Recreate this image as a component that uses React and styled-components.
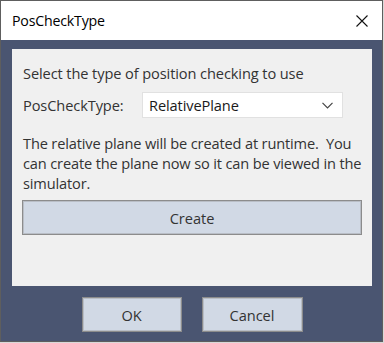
import React from "react";
import styled, { createGlobalStyle } from "styled-components";

const Global = createGlobalStyle`
  html, body { margin: 0; padding: 0; background: #d9d9d9; }
  body { font-family: "Open Sans", "Noto Sans", sans-serif; }
`;

const Window = styled.div`
  box-sizing: border-box;
  width: 383px;
  height: 342px;
  border: 1px solid #5e5e5e;
  display: flex;
  flex-direction: column;
  background: #4a5571;
`;

const TitleBar = styled.div`
  height: 39px;
  background: #ffffff;
  display: flex;
  align-items: center;
  justify-content: space-between;
  padding: 0 14px 0 11px;
  flex-shrink: 0;
`;

const Title = styled.span`
  font-size: 14.2px;
  color: #000;
  letter-spacing: -0.2px;
  margin-top: -1px;
`;

const CloseIcon = styled.svg`
  width: 12px;
  height: 12px;
  display: block;
`;

const Frame = styled.div`
  flex: 1;
  display: flex;
  flex-direction: column;
  padding: 9px 10px 0 11px;
`;

const Panel = styled.div`
  box-sizing: border-box;
  height: 237px;
  background: #f0f0f0;
  padding: 14px 10px 0 10px;
  display: flex;
  flex-direction: column;
  color: #333;
  font-size: 14.6px;
  line-height: 20px;
  letter-spacing: -0.1px;
`;

const Text = styled.div`
  padding-left: 1px;
`;

const FieldRow = styled.div`
  display: flex;
  align-items: center;
  margin-top: 9px;
`;

const Label = styled.span`
  width: 119px;
  padding-left: 1px;
`;

const Select = styled.div`
  box-sizing: border-box;
  width: 201px;
  height: 26px;
  background: #fff;
  border: 1px solid #e1e1e1;
  display: flex;
  align-items: center;
  justify-content: space-between;
  padding: 0 9px 0 6px;
  color: #1a1a1a;
`;

const Chevron = styled.svg`
  width: 11px;
  height: 7px;
  display: block;
`;

const Paragraph = styled.div`
  margin: 15px -6px 0 0;
  padding-left: 1px;
  letter-spacing: -0.15px;
`;

const Button = styled.button`
  box-sizing: border-box;
  width: ${(p) => p.$w}px;
  height: 35px;
  background: #d1d9e5;
  border: 1px solid #8c8c8c;
  box-shadow: inset 0 0 0 1px #b9bec6;
  font-family: inherit;
  font-size: 14.6px;
  color: #333;
  letter-spacing: -0.05px;
  padding: 0;
  margin: 0;
`;

const CreateWrap = styled.div`
  margin-top: 7px;
`;

const ButtonRow = styled.div`
  display: flex;
  justify-content: center;
  gap: 20px;
  margin-top: 11px;
`;

export default function App() {
  return (
    <>
      <Global />
      <Window>
        <TitleBar>
          <Title>PosCheckType</Title>
          <CloseIcon viewBox="0 0 12 12">
            <path d="M0.5 0.5 L11.5 11.5 M11.5 0.5 L0.5 11.5" stroke="#111" strokeWidth="1.1" fill="none" />
          </CloseIcon>
        </TitleBar>
        <Frame>
          <Panel>
            <Text>Select the type of position checking to use</Text>
            <FieldRow>
              <Label>PosCheckType:</Label>
              <Select>
                <span>RelativePlane</span>
                <Chevron viewBox="0 0 11 7">
                  <path d="M0.5 0.8 L5.5 5.8 L10.5 0.8" stroke="#444" strokeWidth="1.2" fill="none" />
                </Chevron>
              </Select>
            </FieldRow>
            <Paragraph>
              The relative plane will be created at runtime.&nbsp; You can create the plane now so it can be viewed in the simulator.
            </Paragraph>
            <CreateWrap>
              <Button $w={340}>Create</Button>
            </CreateWrap>
          </Panel>
          <ButtonRow>
            <Button $w={100}>OK</Button>
            <Button $w={101}>Cancel</Button>
          </ButtonRow>
        </Frame>
      </Window>
    </>
  );
}
